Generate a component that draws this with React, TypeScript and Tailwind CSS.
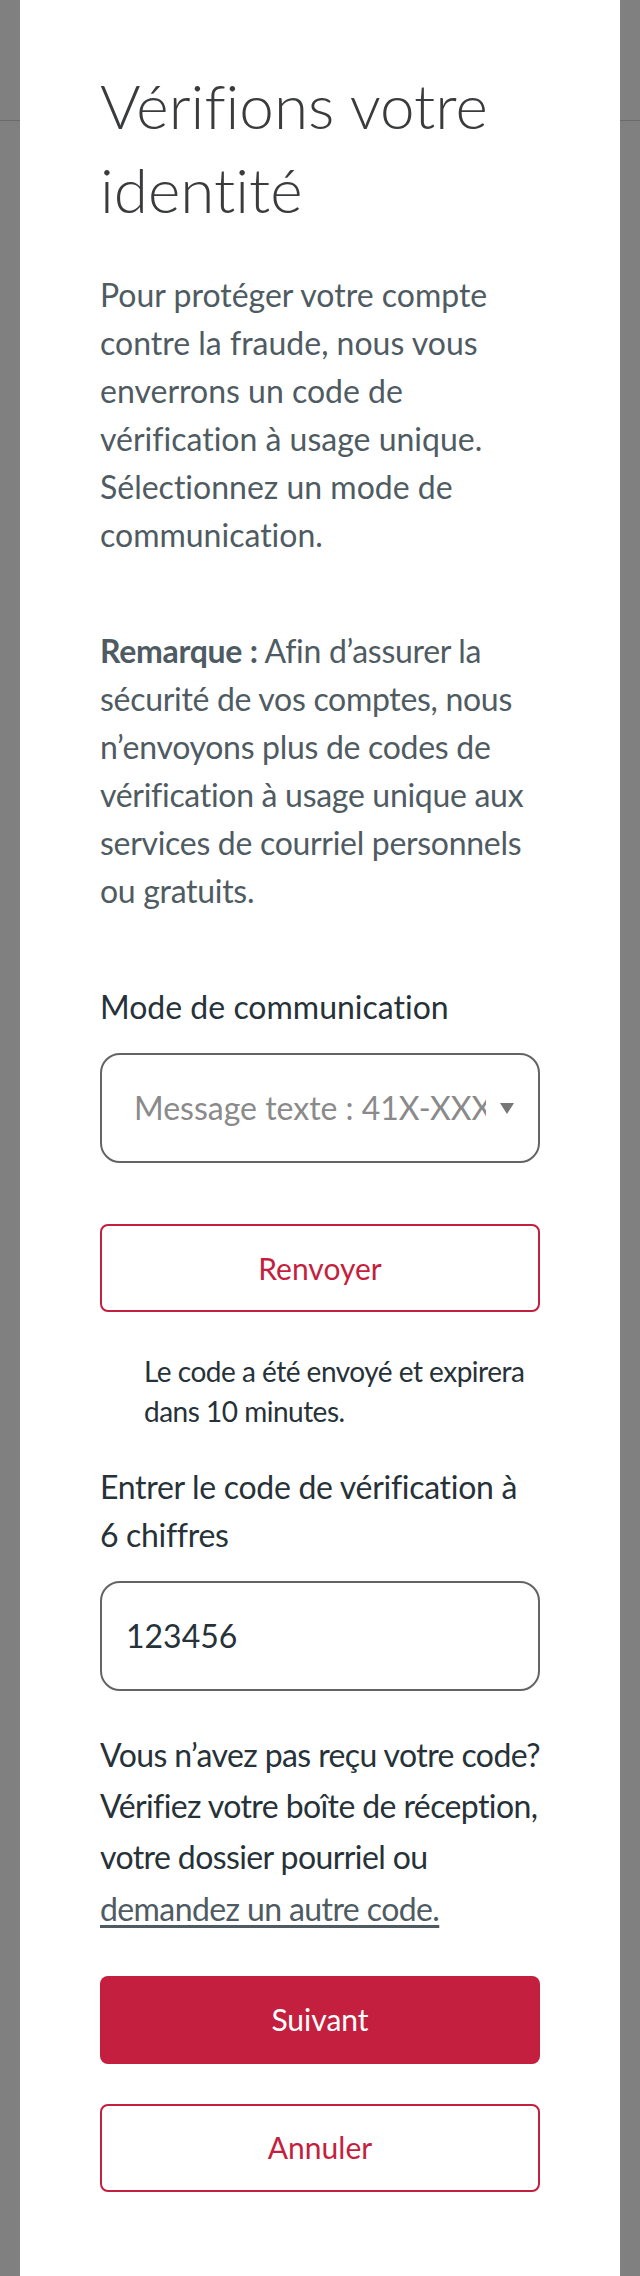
import React from "react";

function Gutter() {
  return (
    <div className="w-[20px] shrink-0">
      <div className="h-[121px] border-b border-[#6a6a6a]" />
    </div>
  );
}

export default function App() {
  return (
    <div
      className="flex min-h-[2276px] w-[640px] bg-[#808080] [font-variant-ligatures:none]"
      style={{ fontFamily: "Lato, 'Open Sans', sans-serif" }}
    >
      <Gutter />
      <main className="w-[600px] shrink-0 bg-white px-[80px] pt-[63px] pb-[84px]">
        <h1 className="text-[62px] leading-[84px] font-light text-[#3a3b3d]">
          Vérifions votre identité
        </h1>

        <p className="mt-[40px] whitespace-nowrap text-[32px] leading-[48px] text-[#4f5b62]">
          Pour protéger votre compte
          <br />
          contre la fraude, nous vous
          <br />
          enverrons un code de
          <br />
          vérification à usage unique.
          <br />
          Sélectionnez un mode de
          <br />
          communication.
        </p>

        <p className="mt-[68px] whitespace-nowrap text-[32px] leading-[48px] tracking-[-0.3px] text-[#4f5b62]">
          <span className="font-bold">Remarque&#8239;:</span> Afin d’assurer la
          <br />
          sécurité de vos comptes, nous
          <br />
          n’envoyons plus de codes de
          <br />
          vérification à usage unique aux
          <br />
          services de courriel personnels
          <br />
          ou gratuits.
        </p>

        <div className="mt-[68px] whitespace-nowrap text-[32px] leading-[48px] text-[#263238]">
          Mode de communication
        </div>

        <div className="mt-[22px] flex h-[110px] items-center rounded-[20px] border-2 border-[#646464] bg-white pl-[32px] pr-[24px]">
          <div className="min-w-0 flex-1 overflow-hidden whitespace-nowrap text-[32px] text-[#8a8a8a]">
            Message texte&#8239;: 41X-XXX-XXXX
          </div>
          <svg
            className="ml-[14px] shrink-0"
            width="14"
            height="11"
            viewBox="0 0 14 11"
          >
            <path d="M0 0 H14 L7 11 Z" fill="#777777" />
          </svg>
        </div>

        <button className="mt-[61px] flex h-[88px] w-full items-center justify-center rounded-[8px] border-2 border-[#c41f3e] bg-white text-[30px] text-[#c41f3e]">
          Renvoyer
        </button>

        <p className="mt-[39px] whitespace-nowrap pl-[44px] text-[28px] leading-[40px] tracking-[-0.5px] text-[#263238]">
          Le code a été envoyé et expirera
          <br />
          dans 10 minutes.
        </p>

        <div className="mt-[32px] whitespace-nowrap text-[32px] leading-[48px] tracking-[-0.3px] text-[#263238]">
          Entrer le code de vérification à
          <br />
          6&#8239;chiffres
        </div>

        <div className="mt-[22px] flex h-[110px] items-center rounded-[20px] border-2 border-[#646464] bg-white pl-[24px] text-[32px] text-[#263238]">
          123456
        </div>

        <p className="mt-[38px] whitespace-nowrap text-[32px] leading-[51.2px] tracking-[-0.6px] text-[#263238]">
          Vous n’avez pas reçu votre code?
          <br />
          Vérifiez votre boîte de réception,
          <br />
          votre dossier pourriel ou
          <br />
          <a className="text-[#4f5b62] underline underline-offset-[4px]">
            demandez un autre code.
          </a>
        </p>

        <button className="mt-[42px] flex h-[88px] w-full items-center justify-center rounded-[8px] bg-[#c41f3e] text-[30px] text-white">
          Suivant
        </button>

        <button className="mt-[40px] flex h-[88px] w-full items-center justify-center rounded-[8px] border-2 border-[#c41f3e] bg-white text-[30px] text-[#c41f3e]">
          Annuler
        </button>
      </main>
      <Gutter />
    </div>
  );
}
